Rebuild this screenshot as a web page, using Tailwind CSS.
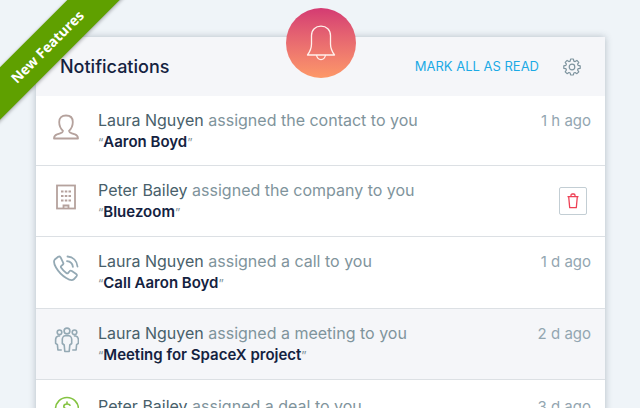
<!DOCTYPE html>
<html lang="en">
<head>
  <meta charset="UTF-8" />
  <meta name="viewport" content="width=device-width, initial-scale=1" />
  <title>Notifications</title>
  <script src="https://cdn.jsdelivr.net/npm/@tailwindcss/browser@4"></script>
</head>
<body class="relative h-screen overflow-hidden bg-[#eff4f8] font-[Inter,sans-serif] text-base">

  <!-- Ribbon -->
  <div class="absolute top-7 -left-[53px] z-10 flex h-[37px] w-[200px] -rotate-45 items-center justify-center bg-[#5fa000] font-['Noto_Sans',sans-serif] text-sm font-bold text-white shadow-[0_1px_4px_rgba(0,0,0,0.35)]">New Features</div>

  <!-- Notifications card -->
  <main class="relative mt-[37px] mr-[35px] ml-9 bg-white shadow-[0_0_7px_rgba(40,60,80,0.3)]">

    <!-- Bell -->
    <div class="absolute -top-[29px] left-1/2 flex size-[70px] -translate-x-1/2 items-center justify-center rounded-full bg-linear-to-b from-[#d43a72] to-[#fd9868]">
      <svg class="h-9 w-[30px]" viewBox="0 0 30 36" fill="none" stroke="#fff0ec" stroke-width="1.3" stroke-linejoin="round">
        <path d="M1.500 30c2.500-3.500 4-6 4-11v-8.500C5.500 4.700 9.500 1.200 15 1.200s9.500 3.500 9.500 9.300V19c0 5 1.500 7.500 4 11z" />
        <path d="M10.500 30c.5 2.900 2.200 4.600 4.500 4.600s4-1.700 4.500-4.600" />
      </svg>
    </div>

    <header class="flex h-[59px] items-center bg-[#f5f6f9] pr-6 pl-6">
      <h1 class="text-lg font-medium text-[#142240]">Notifications</h1>
      <button class="ml-auto text-[13px] text-[#1baae5]">MARK ALL AS READ</button>
      <button class="ml-6" aria-label="Settings">
        <svg class="size-[18px]" viewBox="0 0 18 18" fill="none" stroke="#7d939e" stroke-width="1.2" stroke-linejoin="round">
          <path d="M7.600 1h2.800l.4 2.100 1.300.5 1.800-1.200 1.900 1.900-1.200 1.800.5 1.300 2.100.4v2.500l-2.100.4-.5 1.300 1.200 1.800-1.900 1.900-1.800-1.200-1.300.5-.4 2H7.600l-.4-2-1.300-.5-1.800 1.200-1.900-1.900L3.400 12l-.5-1.300-2.100-.4V7.800l2.100-.4.5-1.300-1.200-1.800 1.900-1.900 1.800 1.200 1.300-.5z" />
          <circle cx="9" cy="9" r="2.800" />
        </svg>
      </button>
    </header>

    <ul class="text-[#7f949c]">
      <!-- Contact -->
      <li class="flex h-[70px] border-b border-[#dce0e4] pt-[13px] pr-[14px] pl-[17px]">
        <svg class="mt-[5px] mr-[19px] size-[26px] shrink-0" viewBox="0 0 26 26" fill="none" stroke="#b5a29d" stroke-width="1.800" stroke-linejoin="round">
          <path d="M10 16.800C7.400 14.500 6.200 11.200 6.200 8 6.200 3.900 8.800 1.500 13 1.500s6.800 2.400 6.800 6.500c0 3.200-1.200 6.500-3.800 8.800.2 1.500 1.200 2 2.800 2.500l3.200 1c2 .7 3 2 3 4.200H1c0-2.200 1-3.500 3-4.200l3.200-1c1.600-.5 2.600-1 2.800-2.500z" />
        </svg>
        <div class="leading-[22px]">
          <p><span class="text-[#48606a]">Laura Nguyen</span> assigned the contact to you</p>
          <p class="text-[15px] font-semibold text-[#142240]"><span class="text-xs font-normal text-[#7f949c]">“</span>Aaron Boyd<span class="text-xs font-normal text-[#7f949c]">”</span></p>
        </div>
        <time class="ml-auto text-[15px] leading-6 text-[#93a6b1]">1 h ago</time>
      </li>

      <!-- Company -->
      <li class="flex h-[71px] border-b border-[#dce0e4] pt-[13px] pr-[18px] pl-[17px]">
        <svg class="mt-[5px] mr-[19px] size-[26px] shrink-0" viewBox="0 0 26 26" fill="none" stroke="#b5a29d" stroke-width="1.800">
          <rect x="4" y="1.500" width="18" height="23" />
          <path d="M8 7.500h2.500M11.800 7.500h2.500M15.500 7.500h2.500M8 12h2.500M11.800 12h2.500M15.500 12h2.500M8 16.500h2.500M11.800 16.500h2.500M15.500 16.500h2.500" stroke-width="2.200" />
          <path d="M10.500 24v-2.500h5V24" />
        </svg>
        <div class="leading-[22px]">
          <p><span class="text-[#48606a]">Peter Bailey</span> assigned the company to you</p>
          <p class="text-[15px] font-semibold text-[#142240]"><span class="text-xs font-normal text-[#7f949c]">“</span>Bluezoom<span class="text-xs font-normal text-[#7f949c]">”</span></p>
        </div>
        <button class="mt-2 ml-auto flex size-7 items-center justify-center rounded-xs border border-[#c3ced4] bg-white" aria-label="Delete">
          <svg class="h-4 w-3" viewBox="0 0 12 16" fill="none" stroke="#ee4055" stroke-width="1.300" stroke-linejoin="round">
            <path d="M.5 3.700h11M1.700 3.700l1 11h6.600l1-11M4 3.500V2.200C4 1.500 4.500 1 5.200 1h1.600C7.500 1 8 1.500 8 2.200v1.300" />
          </svg>
        </button>
      </li>

      <!-- Call -->
      <li class="flex h-[72px] border-b border-[#dce0e4] pt-[13px] pr-[14px] pl-[17px]">
        <svg class="mt-[5px] mr-[19px] size-[26px] shrink-0" viewBox="0 0 26 26" fill="none" stroke="#94a9b4" stroke-width="1.800" stroke-linecap="round" stroke-linejoin="round">
          <path d="M5.200 1.800 1.800 4.500C.5 6 1 9 3 12.500c2.500 4.300 6 8 10.200 10.500 3.200 2 6.200 2.500 7.600 1.300l2.700-3c.7-.9.500-1.700-.3-2.300l-4.400-3c-.9-.6-1.700-.5-2.300.3l-1.300 1.600c-.5.6-1.200.6-1.900.1-2-1.400-3.700-3.100-5.100-5.200-.5-.7-.5-1.400.1-1.900l1.400-1.200c.8-.6.9-1.400.3-2.300L7.500 2.200c-.6-.8-1.400-1-2.300-.4z" />
          <path d="M14.500 1.500c5.700.4 9.500 4.300 10 10M14 6.200c3.400.3 5.500 2.300 5.900 5.700" />
        </svg>
        <div class="leading-[22px]">
          <p><span class="text-[#48606a]">Laura Nguyen</span> assigned a call to you</p>
          <p class="text-[15px] font-semibold text-[#142240]"><span class="text-xs font-normal text-[#7f949c]">“</span>Call Aaron Boyd<span class="text-xs font-normal text-[#7f949c]">”</span></p>
        </div>
        <time class="ml-auto text-[15px] leading-6 text-[#93a6b1]">1 d ago</time>
      </li>

      <!-- Meeting -->
      <li class="flex h-[71px] border-b border-[#dce0e4] bg-[#f5f6f9] pt-[13px] pr-[14px] pl-[17px]">
        <svg class="mt-[5px] mr-[19px] size-[26px] shrink-0" viewBox="0 0 26 26" fill="none" stroke="#94a9b4" stroke-width="1.600" stroke-linecap="round" stroke-linejoin="round">
          <circle cx="14" cy="4" r="2.900" />
          <circle cx="6.500" cy="5.300" r="2.300" />
          <circle cx="21.500" cy="5.300" r="2.300" />
          <path d="M11.800 24.500l-.6-6.500-1.900-1.500v-4c0-2 1.300-3.700 3-3.700h3.400c1.700 0 3 1.700 3 3.700v4L16.800 18l-.6 6.500z" />
          <path d="M6.500 9H5.300C3.500 9.500 2.600 11 2.600 12.800v3.500l1.800 1.400.5 5.300h3.300M21.500 9h1.200c1.800.5 2.700 2 2.700 3.800v3.500l-1.800 1.400-.5 5.300h-3.300" />
        </svg>
        <div class="leading-[22px]">
          <p><span class="text-[#48606a]">Laura Nguyen</span> assigned a meeting to you</p>
          <p class="text-[15px] font-semibold text-[#142240]"><span class="text-xs font-normal text-[#7f949c]">“</span>Meeting for SpaceX project<span class="text-xs font-normal text-[#7f949c]">”</span></p>
        </div>
        <time class="ml-auto text-[15px] leading-6 text-[#93a6b1]">2 d ago</time>
      </li>

      <!-- Deal -->
      <li class="flex h-[71px] border-b border-[#dce0e4] pt-[15px] pr-[14px] pl-[17px]">
        <svg class="mt-px mr-[19px] size-[26px] shrink-0" viewBox="0 0 26 26" fill="none" stroke="#84c341" stroke-width="1.600" stroke-linecap="round">
          <circle cx="14" cy="13" r="11.500" />
          <path d="M14 6v2M14 18v2M17 9.200c-.7-.8-1.700-1.200-3-1.200-2 0-3.200.9-3.200 2.400 0 3.600 6.700 1.600 6.700 5.200 0 1.600-1.400 2.400-3.500 2.400-1.400 0-2.600-.5-3.400-1.500" />
        </svg>
        <div class="leading-[22px]">
          <p><span class="text-[#48606a]">Peter Bailey</span> assigned a deal to you</p>
        </div>
        <time class="ml-auto text-[15px] leading-6 text-[#93a6b1]">3 d ago</time>
      </li>
    </ul>
  </main>

</body>
</html>
